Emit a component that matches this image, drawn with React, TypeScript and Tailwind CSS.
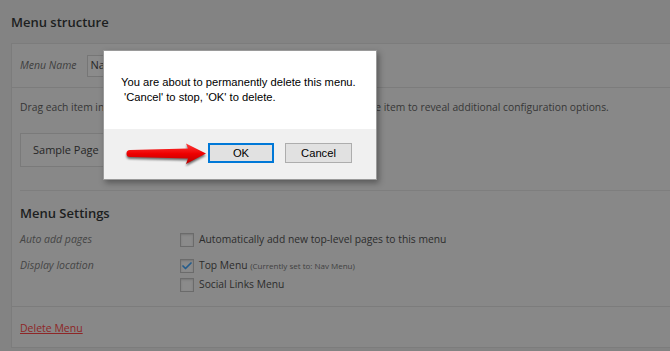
import { Check } from 'lucide-react';

function Checkbox({ checked = false }: { checked?: boolean }) {
  return (
    <span className="w-[14px] h-[14px] border border-[#6b6b6b] bg-[#8b8b8b] shadow-[inset_0_1px_2px_rgba(0,0,0,0.15)] flex items-center justify-center shrink-0">
      {checked && <Check size={12} strokeWidth={3.5} className="text-[#245c8c]" />}
    </span>
  );
}

function RedArrow() {
  return (
    <svg width="92" height="34" viewBox="0 0 92 34" className="absolute left-[17px] top-[86px]">
      <defs>
        <linearGradient id="arrowFill" x1="0" y1="0" x2="0" y2="1">
          <stop offset="0" stopColor="#ff3b3b" />
          <stop offset="0.5" stopColor="#ee0000" />
          <stop offset="1" stopColor="#b80000" />
        </linearGradient>
        <filter id="arrowShadow" x="-20%" y="-40%" width="140%" height="180%">
          <feGaussianBlur stdDeviation="1.3" />
        </filter>
      </defs>
      <path
        d="M9 15 L67 13.5 L65 8.5 L85 18.5 L65 29 L67 23.5 L9 22 A3.5 3.5 0 0 1 9 15 Z"
        fill="#000"
        opacity="0.55"
        filter="url(#arrowShadow)"
      />
      <path
        d="M9 13 L67 11.5 L65 6.5 L85 16.5 L65 27 L67 21.5 L9 20 A3.5 3.5 0 0 1 9 13 Z"
        fill="url(#arrowFill)"
      />
    </svg>
  );
}

export default function App() {
  return (
    <div className="relative w-[670px] h-[351px] overflow-hidden bg-[#838383] font-['Open_Sans',sans-serif]">
      {/* Page behind the dimmed overlay */}
      <h2 className="pl-[11px] pt-[13px] text-[13px] leading-[18px] font-semibold text-[#1c1e20]">Menu structure</h2>

      <div className="mt-[12px] ml-[11px] w-[680px] border border-[#7c7c7c] bg-[#888888]">
        {/* Menu name header */}
        <div className="h-[44px] flex items-center pl-[8px] border-b border-[#7c7c7c]">
          <span className="italic text-[10.5px] text-[#3e3e3e]">Menu Name</span>
          <div className="ml-[10px] w-[180px] h-[22px] border border-[#767676] bg-[#8b8b8b] flex items-center pl-[3px] text-[11px] text-[#262626]">
            Nav Menu
          </div>
        </div>

        {/* Menu items */}
        <div className="px-[8px] pt-[12px]">
          <p className="text-[10.3px] leading-[14px] text-[#363636] whitespace-nowrap">
            Drag each item into the order you prefer. Click the arrow on the right of the item to reveal additional configuration options.
          </p>
          <div className="mt-[19px] w-[260px] h-[34px] border border-[#7a7a7a] bg-[#8a8a8a] flex items-center pl-[12px] text-[11px] font-medium text-[#262626]">
            Sample Page
          </div>
          <div className="mt-[23px] border-t border-[#7e7e7e]" />

          {/* Menu settings */}
          <div className="pt-[13px] pb-[12px]">
            <h3 className="text-[13px] leading-[18px] font-semibold text-[#1c1e20]">Menu Settings</h3>
            <div className="mt-[8px] flex h-[20px] items-center">
              <span className="w-[160px] italic text-[10.5px] text-[#454545]">Auto add pages</span>
              <div className="flex items-center gap-[5px]">
                <Checkbox />
                <span className="text-[10.3px] text-[#2c2c2c]">Automatically add new top-level pages to this menu</span>
              </div>
            </div>
            <div className="mt-[6px] flex">
              <span className="w-[160px] h-[19px] flex items-center italic text-[10.5px] text-[#454545]">Display location</span>
              <div className="flex flex-col">
                <div className="h-[19px] flex items-center gap-[5px]">
                  <Checkbox checked />
                  <span className="text-[10.3px] text-[#2c2c2c]">
                    Top Menu <span className="text-[8px] text-[#404040]">(Currently set to: Nav Menu)</span>
                  </span>
                </div>
                <div className="h-[19px] flex items-center gap-[5px]">
                  <Checkbox />
                  <span className="text-[10.3px] text-[#2c2c2c]">Social Links Menu</span>
                </div>
              </div>
            </div>
          </div>
        </div>

        {/* Footer */}
        <div className="h-[41px] border-t border-[#7c7c7c] pl-[8px] pt-[7px]">
          <a className="text-[10.5px] leading-[14px] text-[#8e2626] underline">Delete Menu</a>
        </div>
      </div>

      {/* Confirm dialog */}
      <div className="absolute left-[103px] top-[50px] w-[274px] h-[130px] border border-[#9a9a9a] bg-white shadow-[2px_3px_6px_rgba(0,0,0,0.35)] flex flex-col font-['Liberation_Sans',Arial,sans-serif] text-[11.2px] text-black">
        <div className="h-[78px] pl-[17px] pt-[24px] leading-[15px]">
          <p>You are about to permanently delete this menu.</p>
          <p className="pl-[3px]">'Cancel' to stop, 'OK' to delete.</p>
        </div>
        <div className="flex-1 bg-[#f0f0f0] flex justify-end items-start gap-[11px] pt-[14px] pr-[24px]">
          <button className="w-[66px] h-[20px] bg-[#e1e1e1] border-2 border-[#0078d7] flex items-center justify-center">OK</button>
          <button className="w-[67px] h-[20px] bg-[#e1e1e1] border border-[#adadad] flex items-center justify-center">Cancel</button>
        </div>
        <RedArrow />
      </div>
    </div>
  );
}
